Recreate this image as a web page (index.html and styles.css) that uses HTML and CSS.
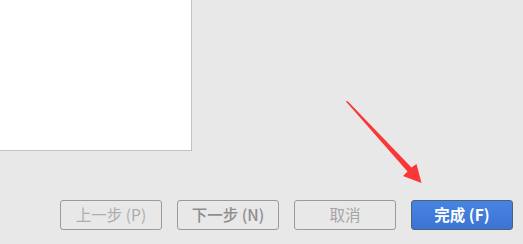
FILE: index.html
```html
<!DOCTYPE html>
<html lang="zh">
<head>
<meta charset="utf-8">
<title>完成</title>
<link rel="stylesheet" href="styles.css">
</head>
<body>
<div class="page">
  <div class="panel"></div>
  <div class="footer">
    <button class="btn btn-disabled">上一步 (P)</button>
    <button class="btn btn-muted">下一步 (N)</button>
    <button class="btn btn-cancel">取消</button>
    <button class="btn btn-primary">完成 (F)</button>
  </div>
  <svg class="arrow" width="523" height="244" viewBox="0 0 523 244" xmlns="http://www.w3.org/2000/svg">
    <polygon points="345.5,101 348,101.5 411.5,167.5 416.5,164 421.5,183 403,176 407.5,171.5" fill="#fb3636"/>
  </svg>
</div>
</body>
</html>
```
FILE: styles.css
```css
* { box-sizing: border-box; }
html, body {
  margin: 0;
  padding: 0;
  width: 523px;
  height: 244px;
  overflow: hidden;
  background: #e8e8e8;
}
.page {
  position: relative;
  width: 523px;
  height: 244px;
  display: flex;
  flex-direction: column;
  font-family: "Noto Sans CJK SC", "Noto Sans", sans-serif;
}
.panel {
  width: 192px;
  height: 151px;
  background: #ffffff;
  border-right: 1px solid #c2c2c2;
  border-bottom: 1px solid #c2c2c2;
}
.footer {
  margin-top: 49px;
  padding-right: 10px;
  display: flex;
  justify-content: flex-end;
  gap: 15px;
}
.btn {
  width: 102px;
  height: 30px;
  border-radius: 3px;
  border: 1px solid #9a9a9a;
  background: #e8e8e8;
  font-family: inherit;
  font-size: 15.5px;
  line-height: 1;
  padding: 0;
  display: flex;
  align-items: center;
  justify-content: center;
}
.btn-disabled { color: #acacac; }
.btn-muted { color: #8e8e8e; font-weight: 500; }
.btn-cancel { color: #a4a4a4; }
.btn-primary {
  background: linear-gradient(#4784e2, #3c74d2);
  border-color: #50617a;
  color: #ffffff;
  font-weight: 600;
}
.arrow {
  position: absolute;
  left: 0;
  top: 0;
  pointer-events: none;
}
```
